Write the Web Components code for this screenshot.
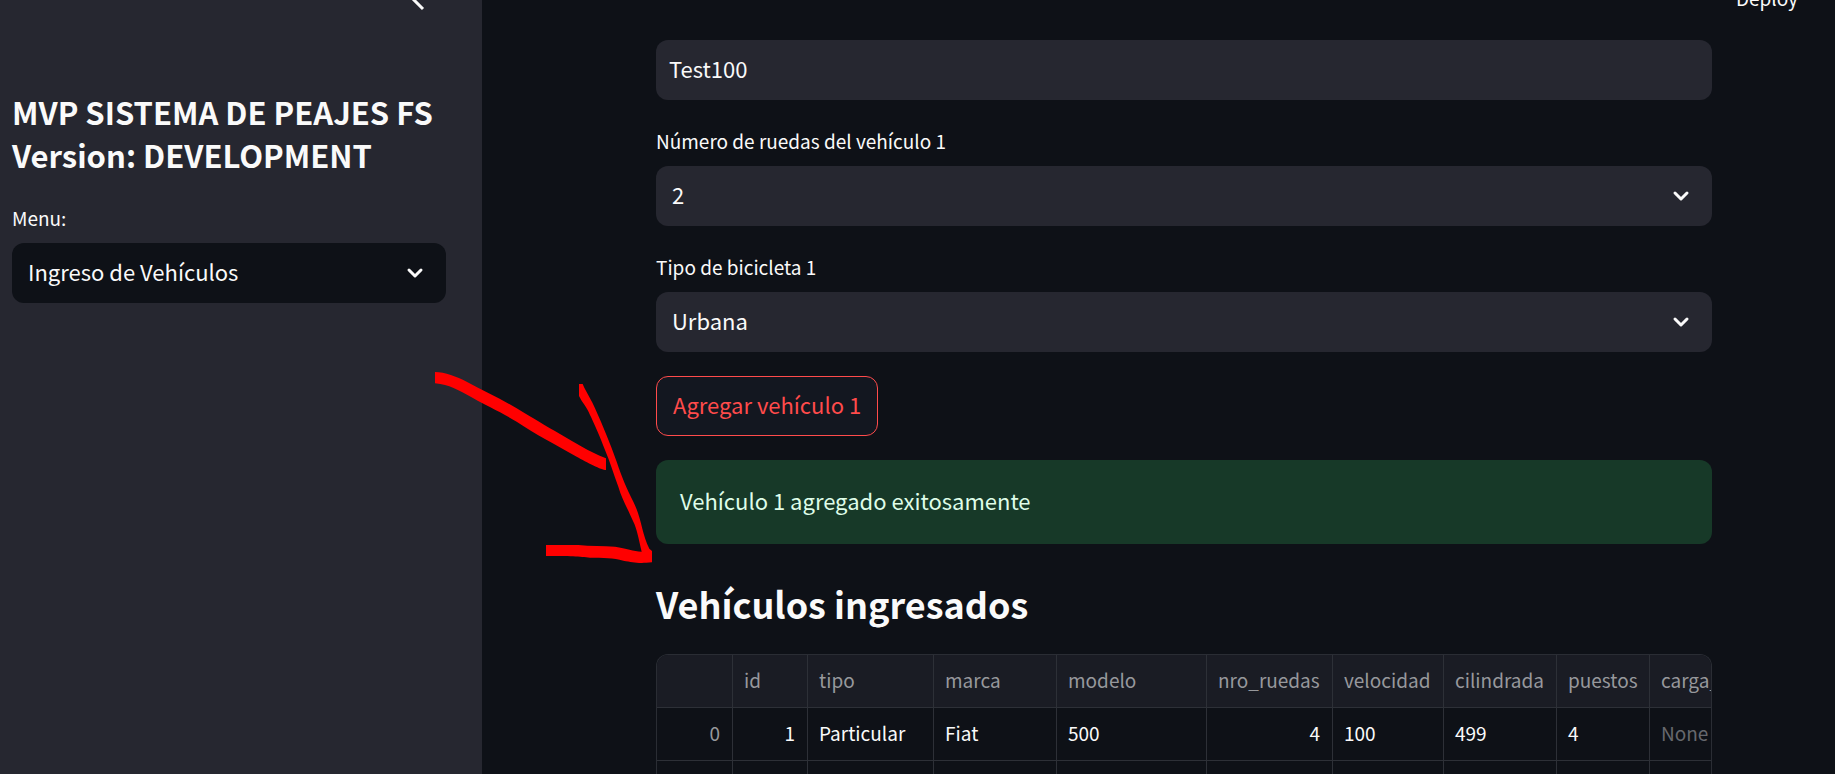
<!DOCTYPE html>
<html lang="es">
<head>
<meta charset="utf-8">
<meta name="viewport" content="width=device-width, initial-scale=1">
<title>MVP Sistema de Peajes FS</title>
<style>
  html, body { margin: 0; height: 100%; }
  body {
    background: #0e1117;
    color: #fafafa;
    font-family: "Noto Sans CJK SC", "Noto Sans", sans-serif;
    font-size: 22px;
    overflow: hidden;
    --panel: #262730;
    --page: #0e1117;
    --accent: #ff4b4b;
  }
</style>
</head>
<body>
<toll-app></toll-app>

<template id="app-template">
  <style>
    :host { display: flex; position: relative; height: 100vh; overflow: hidden; }
    main { flex: 1; min-width: 0; padding: 0 123px 0 174px; }
    header { display: flex; justify-content: flex-end; height: 40px; margin-right: -86px; }
    header button {
      align-self: flex-start; margin-top: -18px; padding: 0; border: 0; background: none;
      color: inherit; font: inherit; font-size: 19px; line-height: 32px;
    }
    .stack { display: flex; flex-direction: column; gap: 24px; }
    h2 { margin: 11px 0 0; font-size: 36px; line-height: 48px; font-weight: 600; }
    .stack > data-grid { margin-top: 3px; }
    ink-arrow { position: absolute; left: 420px; top: 350px; }
  </style>
  <toll-sidebar></toll-sidebar>
  <main>
    <header><button type="button">Deploy</button></header>
    <div class="stack">
      <text-field label="Nombre" value="Test100"></text-field>
      <select-field label="Número de ruedas del vehículo 1" value="2"></select-field>
      <select-field label="Tipo de bicicleta 1" value="Urbana"></select-field>
      <action-button>Agregar vehículo 1</action-button>
      <success-alert>Vehículo 1 agregado exitosamente</success-alert>
      <h2>Vehículos ingresados</h2>
      <data-grid></data-grid>
    </div>
  </main>
  <ink-arrow></ink-arrow>
</template>

<template id="sidebar-template">
  <style>
    :host { display: block; flex: none; width: 482px; box-sizing: border-box; padding: 0 36px 0 12px; background: var(--panel); }
    .top { display: flex; justify-content: flex-end; height: 90px; padding-right: 16px; }
    .top button { align-self: flex-start; margin-top: -12px; padding: 0; border: 0; background: none; color: inherit; }
    svg { display: block; }
    h1 { margin: 0 0 25px; font-size: 31px; line-height: 43px; font-weight: 600; white-space: nowrap; }
    select-field { --field: var(--page); }
  </style>
  <div class="top">
    <button type="button" aria-label="Cerrar menú">
      <svg width="24" height="24" viewBox="0 0 24 24" fill="none" stroke="currentColor" stroke-width="3"><path d="M17 21 7.500 11.500 17 2"/></svg>
    </button>
  </div>
  <h1>MVP SISTEMA DE PEAJES FS<br>Version: DEVELOPMENT</h1>
  <select-field label="Menu:" value="Ingreso de Vehículos"></select-field>
</template>

<template id="select-template">
  <style>
    :host { display: block; }
    label { display: block; font-size: 19px; line-height: 34px; margin-bottom: 8px; }
    .box { display: grid; align-items: center; }
    select, svg { grid-area: 1 / 1; }
    select {
      appearance: none; width: 100%; height: 60px; padding: 0 56px 4px 16px; border: 0; border-radius: 12px;
      background: var(--field, var(--panel)); color: inherit; font: inherit;
    }
    svg { justify-self: end; margin-right: 19px; pointer-events: none; }
  </style>
  <label for="control"></label>
  <div class="box">
    <select id="control"></select>
    <svg width="24" height="24" viewBox="0 0 24 24" fill="none" stroke="currentColor" stroke-width="3" stroke-linecap="round" stroke-linejoin="round"><path d="M6 9l6 6 6-6"/></svg>
  </div>
</template>

<template id="text-template">
  <style>
    :host { display: block; }
    input {
      display: block; box-sizing: border-box; width: 100%; height: 60px; padding: 0 13px 4px; border: 0; border-radius: 12px;
      background: var(--panel); color: inherit; font: inherit;
    }
  </style>
  <input type="text">
</template>

<template id="button-template">
  <style>
    :host { display: flex; }
    button {
      height: 60px; padding: 0 16px 4px; border: 1px solid var(--accent); border-radius: 12px;
      background: #131720; color: var(--accent); font: inherit;
    }
  </style>
  <button type="button"><slot></slot></button>
</template>

<template id="alert-template">
  <style>
    :host { display: block; padding: 22px 24px 26px; border-radius: 12px; background: #173928; color: #dffde9; line-height: 36px; }
  </style>
  <div role="status"><slot></slot></div>
</template>

<template id="grid-template">
  <style>
    :host { display: block; overflow: hidden; border: 1px solid #2a2d34; border-radius: 12px 12px 0 0; border-bottom: 0; }
    table { width: 1142px; table-layout: fixed; border-collapse: separate; border-spacing: 0; font-size: 19px; }
    th, td {
      box-sizing: border-box; height: 53px; padding: 0 12px 2px 11px; border: solid #2d3037; border-width: 0 1px 1px 0;
      font-weight: 400; text-align: left; line-height: 28px; white-space: nowrap;
    }
    thead th { background: #1a1c24; }
    th { color: #97989c; }
    .num, tbody th { text-align: right; }
    .none { color: #66686d; }
  </style>
  <table>
    <colgroup></colgroup>
    <thead><tr></tr></thead>
    <tbody></tbody>
  </table>
</template>

<template id="arrow-template">
  <style>
    :host { display: block; pointer-events: none; }
    svg { display: block; }
  </style>
  <svg width="260" height="230" viewBox="0 0 780 690" fill="#f00" aria-hidden="true">
    <path d="M45 66C75 66 110 80 140 95C190 122 240 145 290 175C340 205 380 230 420 252C470 280 500 302 558 325V360C545 360 500 337 470 320C400 280 350 255 290 215C240 185 200 168 160 145C110 118 90 105 45 100Z"/>
    <path d="M477 102H488C500 130 515 150 525 175C550 230 570 280 590 335C605 380 620 415 640 455C665 505 665 550 688 596L696 603V637C650 642 640 636 610 632C580 622 550 625 510 623C480 620 450 618 378 618V585H475C510 589 550 588 585 590C620 595 640 604 665 605C655 560 650 535 640 515C620 470 605 445 595 410C580 370 570 335 555 300C540 260 520 215 510 195C500 170 488 160 477 138Z"/>
  </svg>
</template>

<script>
  class TemplateElement extends HTMLElement {
    constructor() {
      super();
      const template = document.getElementById(this.constructor.template);
      this.attachShadow({ mode: "open" }).append(template.content.cloneNode(true));
    }
  }

  class TollSidebar extends TemplateElement { static template = "sidebar-template"; }
  class ActionButton extends TemplateElement { static template = "button-template"; }
  class SuccessAlert extends TemplateElement { static template = "alert-template"; }
  class InkArrow extends TemplateElement { static template = "arrow-template"; }
  class TollApp extends TemplateElement { static template = "app-template"; }

  class SelectField extends TemplateElement {
    static template = "select-template";
    connectedCallback() {
      this.shadowRoot.querySelector("label").textContent = this.getAttribute("label");
      const value = this.getAttribute("value");
      this.shadowRoot.querySelector("select").replaceChildren(new Option(value, value, true, true));
    }
  }

  class TextField extends TemplateElement {
    static template = "text-template";
    connectedCallback() {
      const input = this.shadowRoot.querySelector("input");
      input.value = this.getAttribute("value");
      input.setAttribute("aria-label", this.getAttribute("label"));
    }
  }

  const COLUMNS = [
    { name: "", width: 76 },
    { name: "id", width: 75, numeric: true },
    { name: "tipo", width: 126 },
    { name: "marca", width: 123 },
    { name: "modelo", width: 150 },
    { name: "nro_ruedas", width: 126, numeric: true },
    { name: "velocidad", width: 111 },
    { name: "cilindrada", width: 113 },
    { name: "puestos", width: 93 },
    { name: "carga_", width: 149 }
  ];
  const ROWS = [
    ["0", "1", "Particular", "Fiat", "500", "4", "100", "499", "4", "None"],
    ["", "", "", "", "", "", "", "", "", ""]
  ];

  class DataGrid extends TemplateElement {
    static template = "grid-template";
    connectedCallback() {
      const root = this.shadowRoot;
      for (const column of COLUMNS) {
        const col = document.createElement("col");
        col.style.width = column.width + "px";
        root.querySelector("colgroup").append(col);
        const th = document.createElement("th");
        th.scope = "col";
        th.textContent = column.name;
        root.querySelector("thead tr").append(th);
      }
      for (const row of ROWS) {
        const tr = document.createElement("tr");
        row.forEach((text, i) => {
          const cell = document.createElement(i === 0 ? "th" : "td");
          cell.textContent = text;
          if (COLUMNS[i].numeric) cell.className = "num";
          if (text === "None") cell.className = "none";
          tr.append(cell);
        });
        root.querySelector("tbody").append(tr);
      }
    }
  }

  customElements.define("ink-arrow", InkArrow);
  customElements.define("select-field", SelectField);
  customElements.define("text-field", TextField);
  customElements.define("action-button", ActionButton);
  customElements.define("success-alert", SuccessAlert);
  customElements.define("data-grid", DataGrid);
  customElements.define("toll-sidebar", TollSidebar);
  customElements.define("toll-app", TollApp);
</script>
</body>
</html>
